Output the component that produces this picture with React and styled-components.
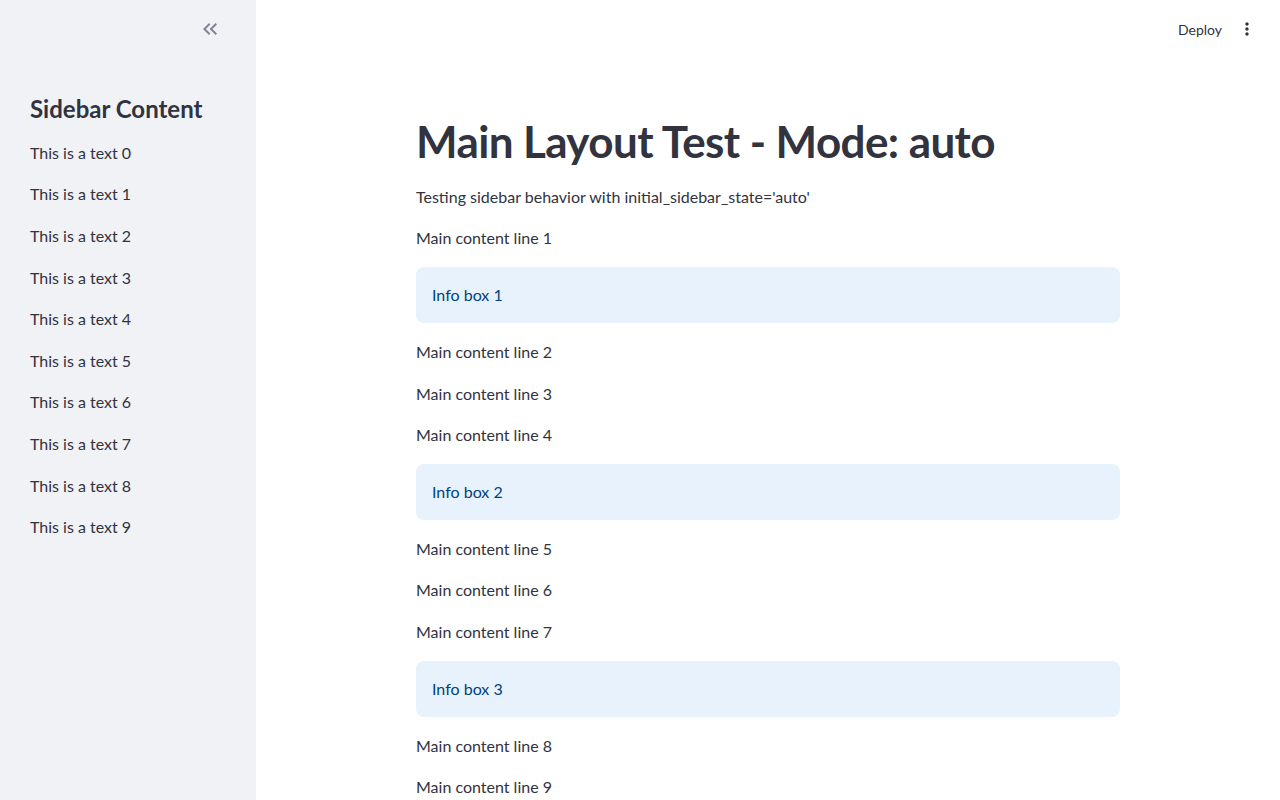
import React from 'react'
import styled, { createGlobalStyle } from 'styled-components'

const GlobalStyle = createGlobalStyle`
  html, body {
    margin: 0;
    padding: 0;
    background: #ffffff;
    font-family: Lato, "Noto Sans", sans-serif;
    color: #31333f;
  }
`

const sidebarLines = [0, 1, 2, 3, 4, 5, 6, 7, 8, 9]

const mainBlocks = [
  { kind: 'text', label: 'Main content line 1' },
  { kind: 'info', label: 'Info box 1' },
  { kind: 'text', label: 'Main content line 2' },
  { kind: 'text', label: 'Main content line 3' },
  { kind: 'text', label: 'Main content line 4' },
  { kind: 'info', label: 'Info box 2' },
  { kind: 'text', label: 'Main content line 5' },
  { kind: 'text', label: 'Main content line 6' },
  { kind: 'text', label: 'Main content line 7' },
  { kind: 'info', label: 'Info box 3' },
  { kind: 'text', label: 'Main content line 8' },
  { kind: 'text', label: 'Main content line 9' },
  { kind: 'text', label: 'Main content line 10' },
]

const App = () => {
  return (
    <Page>
      <GlobalStyle />
      <Sidebar>
        <SidebarHeader>
          <IconButton aria-label="Collapse sidebar">
            <svg width="24" height="24" viewBox="0 0 24 24" fill="currentColor">
              <path d="M17.59 18L19 16.59 14.42 12 19 7.41 17.59 6l-6 6z" />
              <path d="M11 18l1.41-1.41L7.83 12l4.58-4.59L11 6l-6 6z" />
            </svg>
          </IconButton>
        </SidebarHeader>
        <SidebarBody>
          <SidebarTitle>Sidebar Content</SidebarTitle>
          {sidebarLines.map((n) => (
            <Text key={n}>This is a text {n}</Text>
          ))}
        </SidebarBody>
      </Sidebar>

      <Main>
        <TopBar>
          <DeployButton>Deploy</DeployButton>
          <MenuButton aria-label="Main menu">
            <svg width="20" height="20" viewBox="0 0 24 24" fill="currentColor">
              <path d="M12 8c1.1 0 2-.9 2-2s-.9-2-2-2-2 .9-2 2 .9 2 2 2zm0 2c-1.1 0-2 .9-2 2s.9 2 2 2 2-.9 2-2-.9-2-2-2zm0 6c-1.1 0-2 .9-2 2s.9 2 2 2 2-.9 2-2-.9-2-2-2z" />
            </svg>
          </MenuButton>
        </TopBar>
        <Block>
          <Title>Main Layout Test - Mode: auto</Title>
          <Text>Testing sidebar behavior with initial_sidebar_state='auto'</Text>
          {mainBlocks.map((b) =>
            b.kind === 'info' ? (
              <InfoBox key={b.label}>{b.label}</InfoBox>
            ) : (
              <Text key={b.label}>{b.label}</Text>
            )
          )}
        </Block>
      </Main>
    </Page>
  )
}

const Page = styled.div`
  display: flex;
  width: 100%;
  height: 800px;
  overflow: hidden;
`

const Sidebar = styled.aside`
  flex: 0 0 256px;
  display: flex;
  flex-direction: column;
  background: #f0f2f6;
  height: 100%;
`

const SidebarHeader = styled.div`
  height: 58px;
  display: flex;
  align-items: center;
  justify-content: flex-end;
  padding-right: 34px;
`

const IconButton = styled.button`
  display: flex;
  align-items: center;
  justify-content: center;
  padding: 0;
  border: none;
  background: none;
  color: #808495;
  cursor: pointer;
`

const SidebarBody = styled.div`
  display: flex;
  flex-direction: column;
  gap: 16px;
  padding: 37px 30px 0;
`

const SidebarTitle = styled.h2`
  margin: 0;
  font-size: 24px;
  font-weight: 700;
  line-height: 28.8px;
  color: #31333f;
`

const Main = styled.main`
  flex: 1;
  display: flex;
  flex-direction: column;
  height: 100%;
`

const TopBar = styled.header`
  height: 58px;
  flex: 0 0 58px;
  display: flex;
  align-items: center;
  justify-content: flex-end;
  gap: 15px;
  padding-right: 23px;
`

const DeployButton = styled.button`
  border: none;
  background: none;
  padding: 0;
  font-family: inherit;
  font-size: 14px;
  color: #31333f;
  cursor: pointer;
`

const MenuButton = styled(IconButton)`
  color: #31333f;
`

const Block = styled.div`
  width: 704px;
  margin: 0 auto;
  padding-top: 37px;
  display: flex;
  flex-direction: column;
  gap: 16px;
`

const Title = styled.h1`
  margin: 0;
  padding-top: 20px;
  font-size: 44px;
  font-weight: 700;
  line-height: 52.8px;
  letter-spacing: -0.6px;
  color: #31333f;
`

const Text = styled.p`
  margin: 0;
  font-size: 16px;
  line-height: 25.6px;
  color: #31333f;
`

const InfoBox = styled.div`
  height: 56px;
  box-sizing: border-box;
  padding: 0 16px;
  display: flex;
  align-items: center;
  border-radius: 8px;
  background: #e8f2fc;
  color: #004280;
  font-size: 16px;
`

export default App
